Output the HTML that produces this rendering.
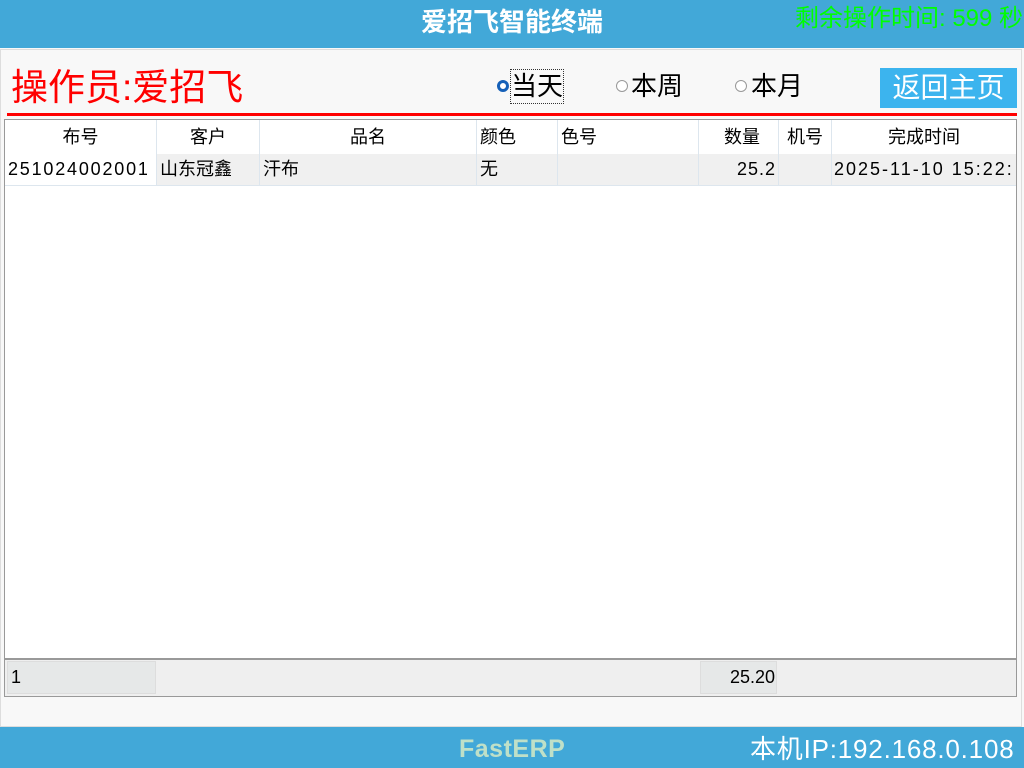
<!DOCTYPE html>
<html><head><meta charset="utf-8"><style>
*{margin:0;padding:0;box-sizing:border-box}
body{width:1024px;height:768px;position:relative;overflow:hidden;background:#f8f8f8;font-family:"Liberation Sans","Noto Sans CJK SC",sans-serif}
.a{position:absolute;white-space:nowrap}
.hd{left:0;top:0;width:1024px;height:48px;background:#42a8d8}
.ft{left:0;top:727px;width:1024px;height:41px;background:#42a8d8}
.c{position:absolute;font-size:18px;color:#000;line-height:32px;overflow:hidden;white-space:nowrap}
</style></head><body>
<div class="a hd"></div>
<div class="a" style="left:0;top:3px;width:1024px;text-align:center;color:#fff;font-size:26px;font-weight:bold;line-height:38px">爱招飞智能终端</div>
<div class="a" style="left:795px;top:2px;color:#00ff00;font-size:24px;line-height:34px">剩余操作时间: 599 秒</div>
<div class="a" style="left:0;top:49px;width:1022px;height:678px;border:1px solid #ddd;background:#f8f8f8"></div>
<div class="a" style="left:11px;top:65px;color:#f00;font-size:37px;line-height:46px">操作员:爱招飞</div>
<div class="a" style="left:7px;top:113px;width:1010px;height:3px;background:#f00"></div>
<div class="a" style="left:497px;top:80px;width:12px;height:12px;border-radius:50%;border:3px solid #1560b8;background:#fff"></div>
<div class="a" style="left:511px;top:70px;font-size:26px;line-height:33px;outline:1px dotted #333">当天</div>
<div class="a" style="left:616px;top:80px;width:12px;height:12px;border-radius:50%;border:1px solid #999;background:#fff"></div>
<div class="a" style="left:631px;top:70px;font-size:26px;line-height:33px">本周</div>
<div class="a" style="left:735px;top:80px;width:12px;height:12px;border-radius:50%;border:1px solid #999;background:#fff"></div>
<div class="a" style="left:751px;top:70px;font-size:26px;line-height:33px">本月</div>
<div class="a" style="left:880px;top:68px;width:137px;height:40px;background:#3cb4ee;color:#fff;font-size:28px;line-height:40px;text-align:center">返回主页</div>
<div class="a" style="left:4px;top:119px;width:1013px;height:578px;border:1px solid #999;background:#fff"></div>
<div class="a" style="left:156px;top:154px;width:860px;height:31px;background:#f0f0f0"></div>
<div class="a" style="left:5px;top:185px;width:1011px;height:1px;background:#dde6ee"></div>
<div class="a" style="left:156px;top:120px;width:1px;height:65px;background:#dde6ee"></div>
<div class="a" style="left:259px;top:120px;width:1px;height:65px;background:#dde6ee"></div>
<div class="a" style="left:476px;top:120px;width:1px;height:65px;background:#dde6ee"></div>
<div class="a" style="left:557px;top:120px;width:1px;height:65px;background:#dde6ee"></div>
<div class="a" style="left:698px;top:120px;width:1px;height:65px;background:#dde6ee"></div>
<div class="a" style="left:778px;top:120px;width:1px;height:65px;background:#dde6ee"></div>
<div class="a" style="left:831px;top:120px;width:1px;height:65px;background:#dde6ee"></div>
<div class="c" style="left:5px;top:121px;width:151px;text-align:center">布号</div>
<div class="c" style="left:157px;top:121px;width:102px;text-align:center">客户</div>
<div class="c" style="left:260px;top:121px;width:216px;text-align:center">品名</div>
<div class="c" style="left:480px;top:121px">颜色</div>
<div class="c" style="left:561px;top:121px">色号</div>
<div class="c" style="left:699px;top:121px;width:61px;text-align:right">数量</div>
<div class="c" style="left:779px;top:121px;width:52px;text-align:center">机号</div>
<div class="c" style="left:832px;top:121px;width:184px;text-align:center">完成时间</div>
<div class="c" style="left:8px;top:153px;letter-spacing:1.8px">251024002001</div>
<div class="c" style="left:160px;top:153px">山东冠鑫</div>
<div class="c" style="left:263px;top:153px">汗布</div>
<div class="c" style="left:480px;top:153px">无</div>
<div class="c" style="left:699px;top:153px;width:77px;text-align:right;letter-spacing:1px">25.2</div>
<div class="c" style="left:834px;top:153px;width:182px;letter-spacing:2px">2025-11-10 15:22:</div>
<div class="a" style="left:5px;top:658px;width:1011px;height:2px;background:#999"></div>
<div class="a" style="left:5px;top:660px;width:1011px;height:36px;background:#efefef"></div>
<div class="a" style="left:7px;top:661px;width:149px;height:33px;background:#e6e8e8;border:1px solid #ddd"></div>
<div class="a" style="left:700px;top:661px;width:77px;height:33px;background:#e6e8e8;border:1px solid #ddd"></div>
<div class="c" style="left:11px;top:661px">1</div>
<div class="c" style="left:700px;top:661px;width:75px;text-align:right">25.20</div>
<div class="a ft"></div>
<div class="a" style="left:459px;top:732px;color:#bfe0c8;font-size:25px;font-weight:bold;line-height:34px;letter-spacing:0.5px">FastERP</div>
<div class="a" style="left:750px;top:731px;color:#fff;font-size:26px;line-height:36px;letter-spacing:0.8px">本机IP:192.168.0.108</div>
</body></html>
